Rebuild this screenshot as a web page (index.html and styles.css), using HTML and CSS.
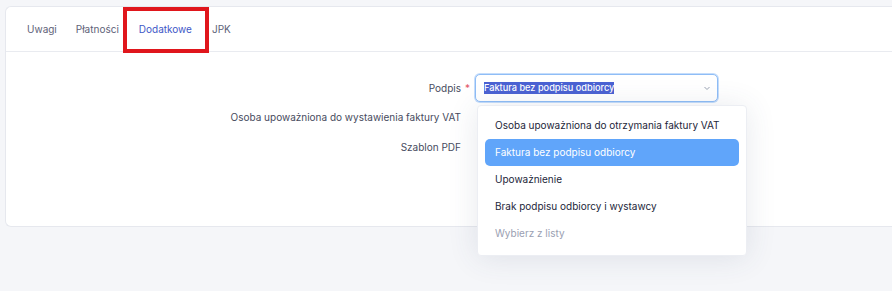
FILE: index.html
```html
<!DOCTYPE html>
<html lang="pl">
<head>
  <meta charset="UTF-8" />
  <title>Dodatkowe</title>
  <link rel="stylesheet" href="styles.css">
</head>
<body>
  <div class="card">
    <div class="tabs">
      <span class="tab">Uwagi</span>
      <span class="tab">Płatności</span>
      <span class="tab active">Dodatkowe</span>
      <span class="tab">JPK</span>
    </div>
    <div class="form">
      <div class="row first">
        <label class="lbl">Podpis<span class="req">*</span></label>
        <div class="field">
          <div class="select">
            <span class="sel-text">Faktura bez podpisu odbiorcy</span>
            <svg class="chev" width="8" height="6" viewBox="0 0 8 6"><path d="M1.5 2l2.5 2.5L6.5 2" fill="none" stroke="#9aa3b2" stroke-width="1"/></svg>
          </div>
          <ul class="menu">
            <li>Osoba upoważniona do otrzymania faktury VAT</li>
            <li class="hl">Faktura bez podpisu odbiorcy</li>
            <li>Upoważnienie</li>
            <li>Brak podpisu odbiorcy i wystawcy</li>
            <li class="ph">Wybierz z listy</li>
          </ul>
        </div>
      </div>
      <div class="row">
        <label class="lbl">Osoba upoważniona do wystawienia faktury VAT</label>
        <div class="field"></div>
      </div>
      <div class="row">
        <label class="lbl">Szablon PDF</label>
        <div class="field"></div>
      </div>
    </div>
  </div>
</body>
</html>
```

FILE: styles.css
```css
html, body {
  height: 100%;
}
body {
  margin: 0;
  background: #f5f6f9;
  font-family: Inter, "Noto Sans", sans-serif;
  font-size: 10px;
  color: #3f4254;
}
.card {
  margin: 6px 0 0 5px;
  height: 221px;
  background: #fff;
  border: 1px solid #e6e8ee;
  border-right: none;
  border-radius: 6px 0 0 6px;
  box-sizing: border-box;
}
.tabs {
  display: flex;
  gap: 20px;
  height: 45px;
  align-items: center;
  padding: 0 0 0 21px;
  border-bottom: 1px solid #e9ebf0;
  box-sizing: border-box;
}
.tab {
  color: #5e6278;
}
.tab:nth-child(2) {
  margin-left: -1px;
}
.tab.active {
  color: #3e57c7;
  position: relative;
}
.tab.active::after {
  content: "";
  position: absolute;
  left: -16px;
  right: -17px;
  top: -16px;
  bottom: -18px;
  border: 4px solid #e0161c;
}
.form {
  padding-top: 22px;
}
.row {
  display: flex;
  align-items: center;
  height: 30px;
}
.row.first {
  height: 28px;
}
.lbl {
  width: 455px;
  text-align: right;
  color: #474b5e;
  position: relative;
}
.req {
  position: absolute;
  left: 100%;
  margin-left: 4px;
  color: #e25563;
}
.field {
  position: relative;
  width: 243px;
  margin-left: 14px;
}
.select {
  height: 28px;
  border: 1px solid #8fbdf6;
  box-shadow: 0 0 0 1px #c5ddfb;
  border-radius: 5px;
  display: flex;
  align-items: center;
  justify-content: space-between;
  padding: 0 6px 0 8px;
  box-sizing: border-box;
  background: #fff;
}
.sel-text {
  background: #4b62d3;
  color: #fff;
  font-size: 9.2px;
  font-weight: 500;
  line-height: 12px;
}
.menu {
  position: absolute;
  left: 2px;
  top: 31px;
  width: 270px;
  height: 151px;
  margin: 0;
  padding: 6px 7px;
  list-style: none;
  background: #fff;
  border: 1px solid #eceef3;
  border-radius: 4px;
  box-shadow: 0 2px 30px rgba(60, 70, 110, 0.12);
  box-sizing: border-box;
  z-index: 5;
}
.menu li {
  height: 27px;
  line-height: 26px;
  padding: 0 10px;
  color: #23263a;
  border-radius: 5px;
  white-space: nowrap;
}
.menu li.hl {
  background: #60a5fa;
  color: #fff;
}
.menu li.ph {
  color: #9aa0b2;
}
```
